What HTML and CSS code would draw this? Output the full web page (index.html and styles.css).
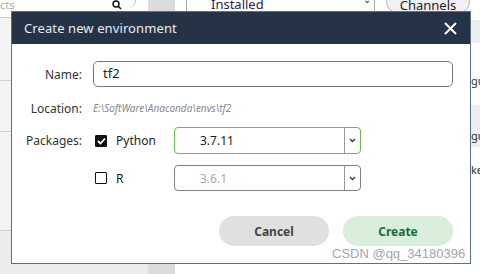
FILE: index.html
```html
<!DOCTYPE html>
<html>
<head>
<meta charset="utf-8">
<link rel="stylesheet" href="styles.css">
</head>
<body>
<div class="app">
  <div class="left">
    <div class="search">
      <span class="search-ph">cts</span>
      <svg class="mag" width="10" height="10" viewBox="0 0 10 10"><circle cx="4" cy="4" r="3" fill="none" stroke="#111" stroke-width="1.4"/><path d="M6.2 6.2 L9 9" stroke="#111" stroke-width="1.6"/></svg>
      <span class="search-end"></span>
    </div>
    <div class="litem h63"></div>
    <div class="litem h51"></div>
    <div class="litem h99"></div>
    <div class="litem last"></div>
  </div>
  <div class="mid"></div>
  <div class="right">
    <div class="header">
      <div class="filter"><span class="filter-text">Installed</span><span class="filter-arrow">&#8964;</span></div>
      <div class="channels">Channels</div>
    </div>
    <div class="rows">
      <div class="row gray h32"></div>
      <div class="row h62"><span class="rtext">gu</span></div>
      <div class="row gray h42"><span class="rtext">gu</span></div>
      <div class="row h40"><span class="rtext">ke</span></div>
    </div>
  </div>
</div>

<div class="dialog">
  <div class="titlebar">
    <span class="title">Create new environment</span>
    <svg class="close" width="13" height="13" viewBox="0 0 13 13"><path d="M1 1 L12 12 M12 1 L1 12" stroke="#fff" stroke-width="2"/></svg>
  </div>
  <div class="body">
    <div class="frow name-row">
      <label class="lbl">Name:</label>
      <div class="input">tf2</div>
    </div>
    <div class="frow loc-row">
      <label class="lbl">Location:</label>
      <div class="loc">E:\SoftWare\Anaconda\envs\tf2</div>
    </div>
    <div class="frow py-row">
      <label class="lbl">Packages:</label>
      <div class="pkg">
        <span class="cb checked"><svg width="9" height="8" viewBox="0 0 9 8"><path d="M1 4 L3.5 6.5 L8 1.5" fill="none" stroke="#fff" stroke-width="1.8"/></svg></span>
        <span class="pkg-name">Python</span>
        <div class="select active"><span class="sel-text">3.7.11</span><span class="sel-btn"><svg width="7" height="5" viewBox="0 0 7 5"><path d="M1 1 L3.5 3.5 L6 1" fill="none" stroke="#333" stroke-width="1.3"/></svg></span></div>
      </div>
    </div>
    <div class="frow r-row">
      <span class="lbl"></span>
      <div class="pkg">
        <span class="cb"></span>
        <span class="pkg-name">R</span>
        <div class="select"><span class="sel-text dim">3.6.1</span><span class="sel-btn"><svg width="7" height="5" viewBox="0 0 7 5"><path d="M1 1 L3.5 3.5 L6 1" fill="none" stroke="#333" stroke-width="1.3"/></svg></span></div>
      </div>
    </div>
    <div class="buttons">
      <button class="btn cancel">Cancel</button>
      <button class="btn create">Create</button>
    </div>
  </div>
</div>
<div class="watermark">CSDN @qq_34180396</div>
</body>
</html>
```

FILE: styles.css
```css
* { box-sizing: border-box; }
html, body { margin: 0; padding: 0; }
body {
  width: 480px;
  height: 274px;
  overflow: hidden;
  font-family: "Noto Sans", "Open Sans", sans-serif;
  background: #fff;
  position: relative;
}
.app {
  display: flex;
  height: 274px;
}
.left {
  width: 148px;
  display: flex;
  flex-direction: column;
  background: #f4f4f4;
}
.search {
  height: 18px;
  background: #fff;
  border-bottom: 1px solid #c8c8c8;
  display: flex;
  align-items: flex-start;
  position: relative;
}
.search-ph { font-size: 11px; color: #aaa; margin-top: -3px; }
.mag { position: absolute; left: 112px; top: 0; }
.search-end {
  position: absolute; left: 125px; top: -8px;
  width: 11px; height: 16px;
  border-right: 1px solid #bbb; border-radius: 0 8px 8px 0;
}
.litem { border-bottom: 1px solid #d0d0d0; }
.h63 { height: 63px; }
.h51 { height: 51px; }
.h99 { height: 99px; }
.litem.last { flex: 1; background: #ececec; border: 0; }
.mid { width: 27px; background: #dcdcdc; }
.right { flex: 1; display: flex; flex-direction: column; }
.header {
  height: 20px;
  display: flex;
  align-items: flex-start;
  padding-left: 11px;
}
.filter {
  width: 188px;
  height: 20px;
  border-left: 1px solid #aaa;
  position: relative;
}
.filter-text { position: absolute; left: 24px; top: -5px; font-size: 13px; color: #2a2540; }
.filter-arrow { position: absolute; left: 176px; top: -8px; font-size: 10px; color: #333; }
.filter::after { content: ""; position: absolute; left: 187px; top: 0; height: 11px; border-left: 1px solid #aaa; }
.channels {
  margin-left: 12px;
  width: 84px;
  height: 22px;
  margin-top: -9px;
  border: 1px solid #bbb;
  border-radius: 11px;
  background: #f2f2f2;
  font-size: 13px;
  text-align: center;
  line-height: 26px;
  color: #222;
}
.rows { flex: 1; display: flex; flex-direction: column; }
.row { position: relative; }
.row.gray { background: #eeeeee; }
.h32 { height: 23px; }
.h62 { height: 62px; }
.h42 { height: 42px; }
.h40 { height: 40px; }
.rtext { position: absolute; left: 296px; bottom: 4px; font-size: 11px; color: #333; }
.row.h62 .rtext { bottom: 17px; }
.row.h40 .rtext { top: 15px; bottom: auto; }

/* dialog overlay */
.dialog {
  position: absolute;
  left: 11px;
  top: 11px;
  width: 460px;
  height: 253px;
  border: 1px solid #5a7380;
  background: #fff;
  display: flex;
  flex-direction: column;
}
.titlebar {
  height: 32px;
  flex: none;
  background: #243446;
  display: flex;
  align-items: center;
  justify-content: space-between;
  padding: 0 13px 0 12px;
}
.title { color: #e6ecf0; font-size: 13px; letter-spacing: 0.1px; }
.close { display: block; }
.body {
  flex: 1;
  padding: 17px 17px 0 0;
  display: flex;
  flex-direction: column;
}
.frow {
  display: flex;
  align-items: center;
  gap: 11px;
}
.name-row { height: 26px; }
.loc-row { height: 16px; margin-top: 13px; }
.py-row { height: 27px; margin-top: 11px; }
.r-row { height: 26px; margin-top: 11px; }
.lbl {
  width: 70px;
  flex: none;
  text-align: right;
  font-size: 12px;
  color: #333;
}
.input {
  flex: 1;
  height: 26px;
  border: 1px solid #777;
  border-radius: 5px;
  font-size: 13px;
  color: #222;
  padding-left: 9px;
  line-height: 23px;
}
.loc { font-size: 10px; font-style: italic; color: #888; line-height: 16px; }
.pkg { display: flex; align-items: center; height: 100%; }
.cb {
  width: 12px; height: 12px;
  margin-left: 2px;
  border: 1.5px solid #111;
  border-radius: 1px;
  display: flex; align-items: center; justify-content: center;
}
.cb.checked { background: #111; }
.pkg-name { font-size: 12px; color: #222; margin-left: 9px; width: 58px; }
.select {
  width: 187px;
  height: 26px;
  border: 1px solid #808080;
  border-radius: 4px;
  display: flex;
  align-items: center;
}
.select.active { border-color: #6dbb4f; height: 27px; }
.sel-text { flex: 1; padding-left: 25px; font-size: 12px; color: #222; }
.sel-text.dim { color: #aaa; }
.sel-btn {
  width: 16px; height: 100%;
  border-left: 1px solid #999;
  display: flex; align-items: center; justify-content: center;
}
.buttons {
  display: flex;
  justify-content: flex-end;
  gap: 14px;
  margin-top: 25px;
}
.btn {
  width: 110px;
  height: 30px;
  border: 0;
  border-radius: 15px;
  font-family: "Noto Sans", "Open Sans", sans-serif;
  font-size: 12px;
  font-weight: bold;
}
.cancel { background: #e0e0e0; color: #444; }
.create { background: #d9eedb; color: #1b6a3a; }
.watermark {
  position: absolute;
  left: 332px;
  top: 246px;
  font-family: "Liberation Sans", Arial, sans-serif;
  font-size: 13px;
  color: #a6a6a6;
  white-space: nowrap;
}
```
